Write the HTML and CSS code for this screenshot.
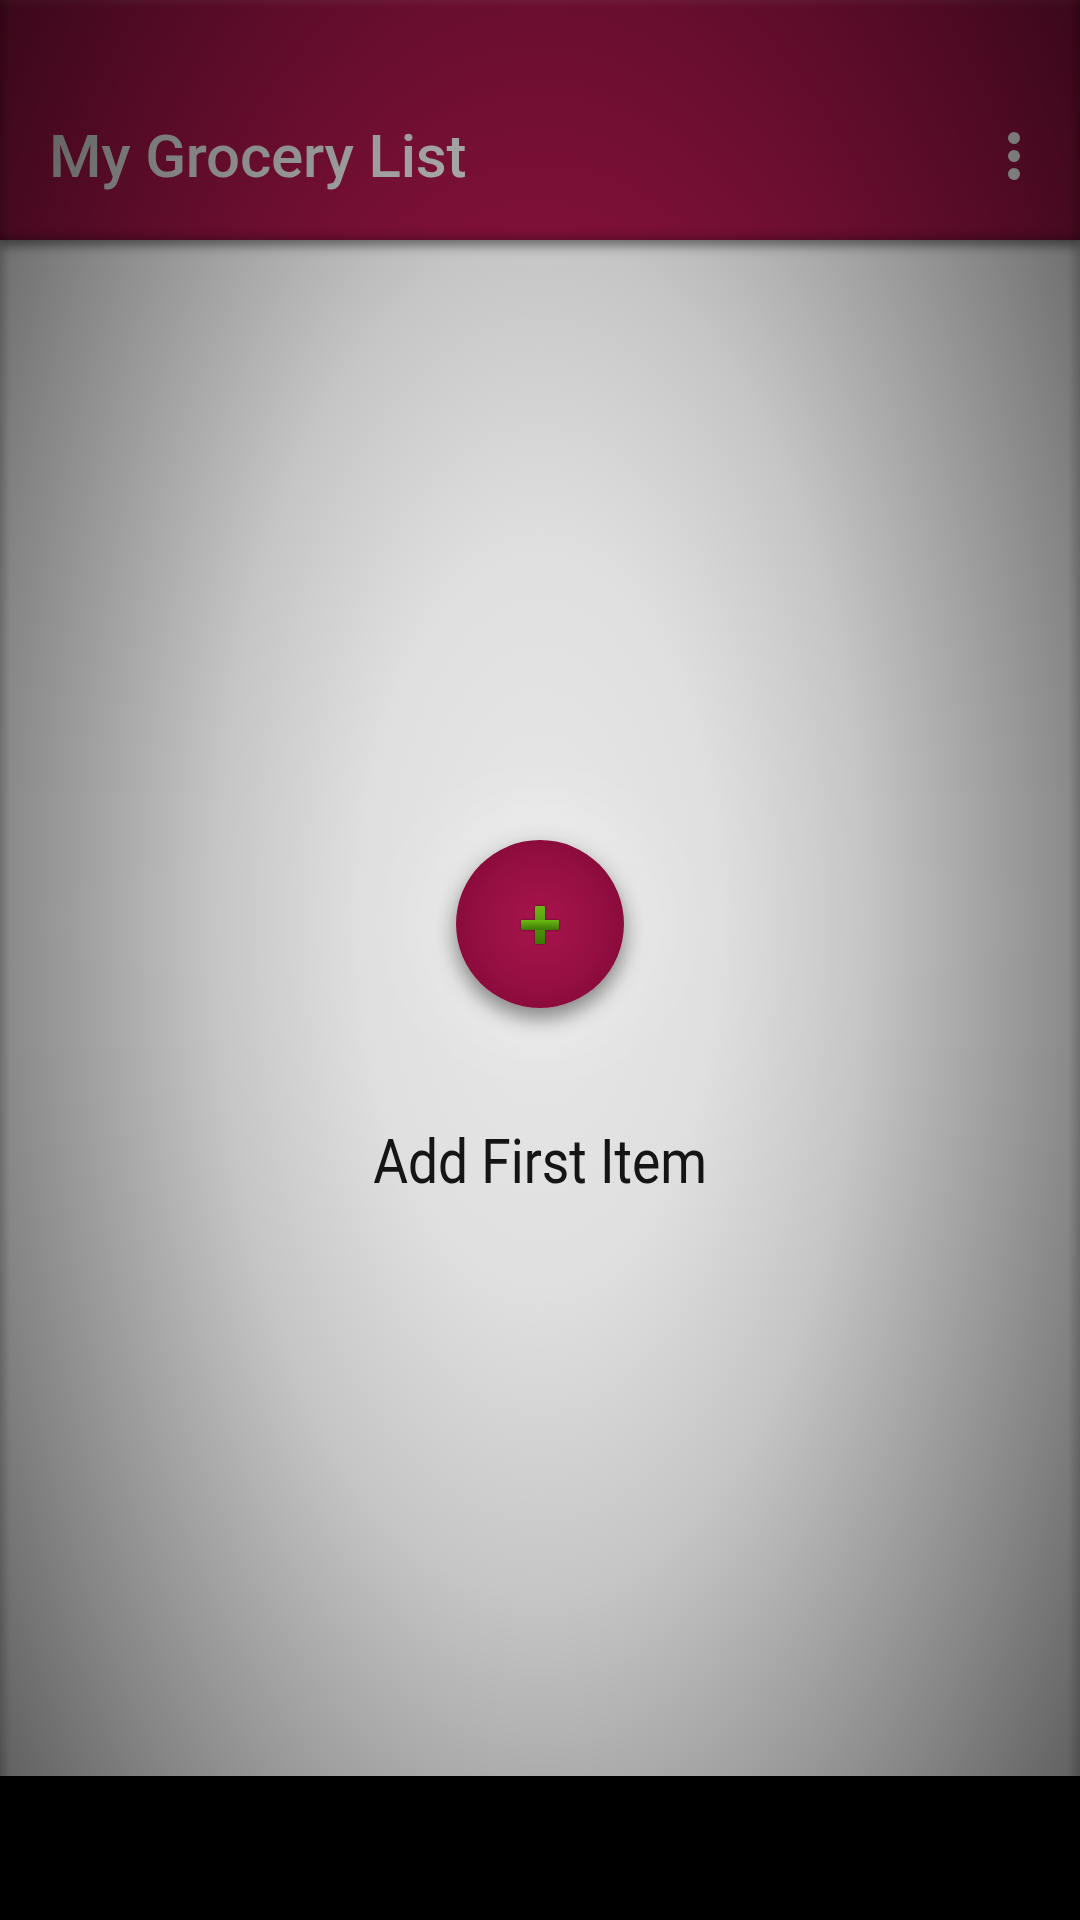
FILE: index.html
```html
<!DOCTYPE html>
<html lang="en">
<head>
<meta charset="utf-8">
<title>My Grocery List</title>
<link rel="stylesheet" href="styles.css">
</head>
<body>
<div class="screen">
  <header class="appbar">
    <h1 class="title">My Grocery List</h1>
    <svg class="menu" width="12" height="48" viewBox="0 0 12 48" aria-label="More options">
      <circle cx="6" cy="6" r="6"/>
      <circle cx="6" cy="24" r="6"/>
      <circle cx="6" cy="42" r="6"/>
    </svg>
  </header>
  <main class="content">
    <button class="fab" aria-label="Add item">
      <svg class="plus" width="40" height="40" viewBox="0 0 40 40">
        <defs>
          <linearGradient id="pg" x1="0" y1="0" x2="0" y2="1">
            <stop offset="0" stop-color="#6cba14"/>
            <stop offset="1" stop-color="#3c7805"/>
          </linearGradient>
        </defs>
        <rect x="15" y="1" width="10" height="38" rx="1" fill="url(#pg)"/>
        <rect x="1" y="15" width="38" height="10" rx="1" fill="url(#pg)"/>
      </svg>
    </button>
    <p class="label"><span>Add First Item</span></p>
  </main>
</div>
<div class="navbar"></div>
</body>
</html>
```

FILE: styles.css
```css
html, body {
  margin: 0;
  padding: 0;
}
body {
  width: 1080px;
  height: 1920px;
  background: #000;
  font-family: Roboto, "Noto Sans", "Liberation Sans", sans-serif;
  overflow: hidden;
}
.screen {
  position: relative;
  height: 1776px;
  display: flex;
  flex-direction: column;
  overflow: hidden;
}
.screen::after {
  content: "";
  position: absolute;
  inset: 0;
  pointer-events: none;
  z-index: 10;
  background:
    linear-gradient(90deg, rgba(0,0,0,.18) 0, rgba(0,0,0,0) 10px, rgba(0,0,0,0) 1068px, rgba(0,0,0,.18) 1080px),
    radial-gradient(ellipse 720px 1500px at 540px 920px, rgba(0,0,0,0) 0%, rgba(0,0,0,.04) 25%, rgba(0,0,0,.15) 45%, rgba(0,0,0,.44) 78%, rgba(0,0,0,.64) 100%);
}
.appbar {
  position: relative;
  z-index: 2;
  height: 166px;
  padding: 74px 50px 0 49px;
  display: flex;
  align-items: center;
  justify-content: space-between;
  background: #951342;
  box-shadow:
    inset 0 8px 6px -4px rgba(255,255,255,.08),
    inset 0 -10px 10px -6px rgba(0,0,0,.25),
    0 6px 10px rgba(0,0,0,.45);
}
.title {
  margin: 0;
  font-size: 60px;
  font-weight: 500;
  line-height: 1;
  color: #cfcfcf;
  letter-spacing: -0.2px;
}
.menu {
  fill: #f0f0f0;
  margin-right: 10px;
  margin-top: -2px;
}
.content {
  flex: 1;
  background: #e8e8e8;
  display: flex;
  flex-direction: column;
  align-items: center;
  padding-top: 600px;
}
.fab {
  width: 168px;
  height: 168px;
  border: 0;
  padding: 0;
  border-radius: 50%;
  background: radial-gradient(circle at 50% 50%, #a8144c 0%, #950e42 55%, #7c0632 100%);
  box-shadow:
    0 10px 18px rgba(0,0,0,.35),
    0 6px 32px rgba(0,0,0,.14),
    0 0 90px 30px rgba(255,255,255,.35);
  display: flex;
  align-items: center;
  justify-content: center;
}
.plus {
  filter: drop-shadow(0 0 1px rgba(0,0,0,.55));
  margin-top: 1px;
}
.label {
  margin: 117px 0 0 0;
  font-size: 62px;
  line-height: 74px;
  font-weight: 400;
  color: #161616;
}
.label span {
  display: inline-block;
  transform: scaleX(0.86);
}
.navbar {
  height: 144px;
  background: #000;
}
```
